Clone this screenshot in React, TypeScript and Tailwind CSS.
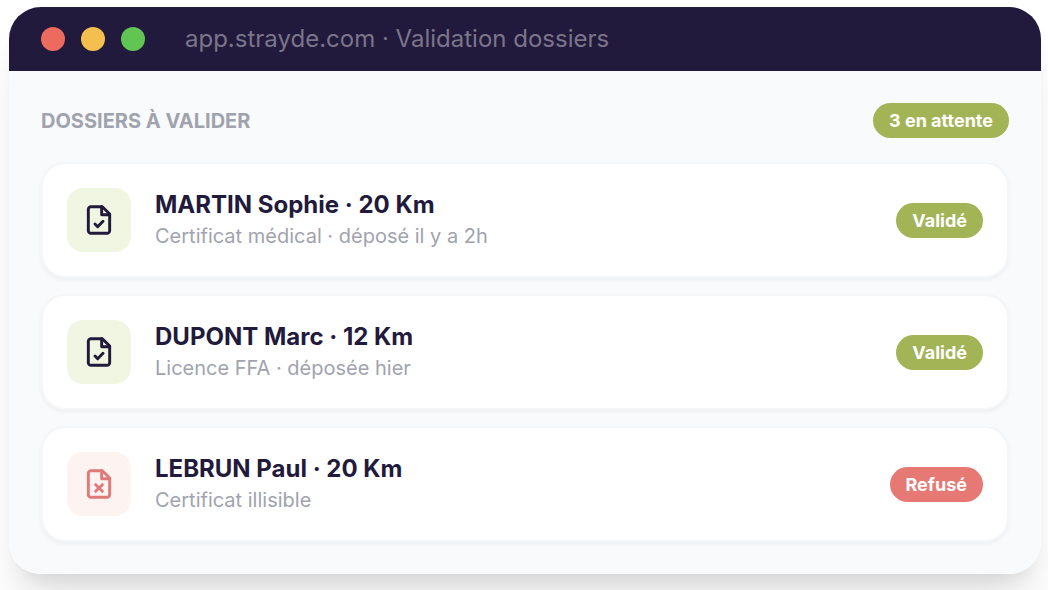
type Dossier = {
  name: string
  detail: string
  isValid: boolean
}

const dossiers: Dossier[] = [
  { name: 'MARTIN Sophie · 20 Km', detail: 'Certificat médical · déposé il y a 2h', isValid: true },
  { name: 'DUPONT Marc · 12 Km', detail: 'Licence FFA · déposée hier', isValid: true },
  { name: 'LEBRUN Paul · 20 Km', detail: 'Certificat illisible', isValid: false },
]

const FileIcon = ({ isValid }: { isValid: boolean }) => (
  <svg
    className="size-8"
    viewBox="0 0 24 24"
    fill="none"
    stroke="currentColor"
    strokeWidth="2.2"
    strokeLinecap="round"
    strokeLinejoin="round"
    aria-hidden="true"
  >
    <path d="M14.5 2H6a2 2 0 0 0-2 2v16a2 2 0 0 0 2 2h12a2 2 0 0 0 2-2V7.5L14.5 2z" />
    <path d="M14 2v6h6" />
    {isValid ? <path d="m9 15 2 2 4-4" /> : <path d="m9.5 12.5 5 5m0-5-5 5" />}
  </svg>
)

const Badge = ({ label, isValid = true }: { label: string; isValid?: boolean }) => (
  <span
    className={`shrink-0 rounded-full px-4 py-1 text-lg leading-[27px] font-bold text-white ${isValid ? 'bg-[#a3b456]' : 'bg-[#e77975]'}`}
  >
    {label}
  </span>
)

const DossierCard = ({ dossier }: { dossier: Dossier }) => (
  <li className="flex items-center gap-6 rounded-3xl border-2 border-[#f5f6f8] bg-white p-6 shadow-[0_2px_4px_rgba(0,0,0,0.05)]">
    <div
      className={`flex size-16 shrink-0 items-center justify-center rounded-2xl ${dossier.isValid ? 'bg-[#f1f6e2] text-[#221a3c]' : 'bg-[#fdf3f1] text-[#e07a78]'}`}
    >
      <FileIcon isValid={dossier.isValid} />
    </div>
    <div className="min-w-0 flex-1">
      <h3 className="text-2xl leading-8 font-bold text-[#221a3c]">{dossier.name}</h3>
      <p className="text-xl leading-[30px] text-[#a0a3ae]">{dossier.detail}</p>
    </div>
    <Badge label={dossier.isValid ? 'Validé' : 'Refusé'} isValid={dossier.isValid} />
  </li>
)

export default function App() {
  return (
    <main className="min-h-screen overflow-hidden bg-white pt-[7px] pr-[7px] pb-4 pl-[9px] font-['Inter',sans-serif]">
      <div className="rounded-[32px] shadow-[0_40px_50px_-10px_rgba(0,0,0,0.1),0_16px_20px_-12px_rgba(0,0,0,0.1)]">
        <header className="flex h-16 items-center gap-4 rounded-t-[32px] bg-[#221a3c] px-8">
          <span className="size-6 rounded-full bg-[#ed6a5e]" />
          <span className="size-6 rounded-full bg-[#f4bf4f]" />
          <span className="size-6 rounded-full bg-[#61c554]" />
          <span className="ml-6 text-2xl text-[#7a758a]">app.strayde.com · Validation dossiers</span>
        </header>
        <section className="rounded-b-[32px] bg-[#f9fafc] p-8">
          <div className="mb-6 flex items-center justify-between">
            <h2 className="text-xl font-bold text-[#a0a3ae] uppercase">Dossiers à valider</h2>
            <Badge label="3 en attente" />
          </div>
          <ul className="flex flex-col gap-4">
            {dossiers.map((d) => (
              <DossierCard key={d.name} dossier={d} />
            ))}
          </ul>
        </section>
      </div>
    </main>
  );
}
